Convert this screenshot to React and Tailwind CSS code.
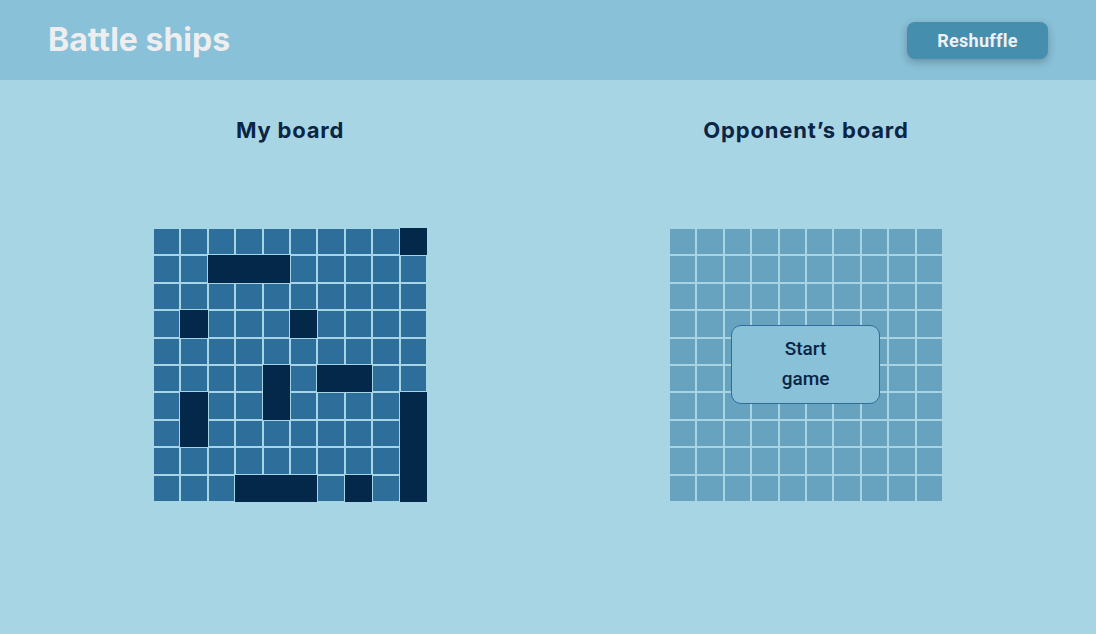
import React from 'react';

const SHIPS = [
  [0, 9],
  [1, 2], [1, 3], [1, 4],
  [3, 1], [3, 5],
  [5, 4], [5, 6], [5, 7],
  [6, 1], [6, 4], [6, 9],
  [7, 1], [7, 9],
  [8, 9],
  [9, 3], [9, 4], [9, 5], [9, 7], [9, 9],
];

const isShip = (r, c) => SHIPS.some(([sr, sc]) => sr === r && sc === c);

function Board({ mine }) {
  const cells = [];
  for (let r = 0; r < 10; r++) {
    for (let c = 0; c < 10; c++) {
      const ship = mine && isShip(r, c);
      cells.push(
        <div
          key={`${r}-${c}`}
          className={`h-[27.4px] border ${
            ship
              ? 'bg-[#03284a] border-[#03284a]'
              : mine
              ? 'bg-[#2d6f9a] border-[#a8d5e4]'
              : 'bg-[#67a3be] border-[#a8d5e4]'
          }`}
        />
      );
    }
  }
  return <div className="grid grid-cols-10 w-[274px]">{cells}</div>;
}

export default function App() {
  return (
    <div className="min-h-[634px] bg-[#a8d5e4] font-['Inter',sans-serif]">
      {/* HEADER */}
      <header className="h-20 bg-[#89c1d8] flex items-center justify-between pl-[48px] pr-[48px]">
        <h1 className="text-[32px] font-bold text-[#eeeef0] tracking-[0px]">Battle ships</h1>
        <button className="w-[141px] h-[37px] rounded-lg bg-[#468ead] text-[#eef0f4] text-[18px] font-bold font-['Roboto',sans-serif] tracking-[0.3px] shadow-[0_3px_8px_rgba(0,0,0,0.25)]">
          Reshuffle
        </button>
      </header>

      {/* BOARDS */}
      <main className="flex justify-between pl-[153px] pr-[153px] pt-[36px]">
        <section className="flex flex-col items-center">
          <h2 className="text-[22px] font-bold text-[#0b2545] h-[28px] leading-[28px] tracking-[0.8px]">My board</h2>
          <div className="mt-[84px]">
            <Board mine />
          </div>
        </section>

        <section className="flex flex-col items-center">
          <h2 className="text-[22px] font-bold text-[#0b2545] h-[28px] leading-[28px] tracking-[0.8px]">Opponent’s board</h2>
          <div className="mt-[84px] relative">
            <Board />
            <button className="absolute left-[62px] top-[97px] w-[149px] h-[79px] rounded-[10px] bg-[#89c1d8] border border-[#2d6f9a] text-[#0b2545] text-[19px] font-medium font-['Roboto',sans-serif] leading-[30px] flex items-center justify-center pb-[2px]">
              <span className="w-[60px] text-center">Start game</span>
            </button>
          </div>
        </section>
      </main>
    </div>
  );
}
